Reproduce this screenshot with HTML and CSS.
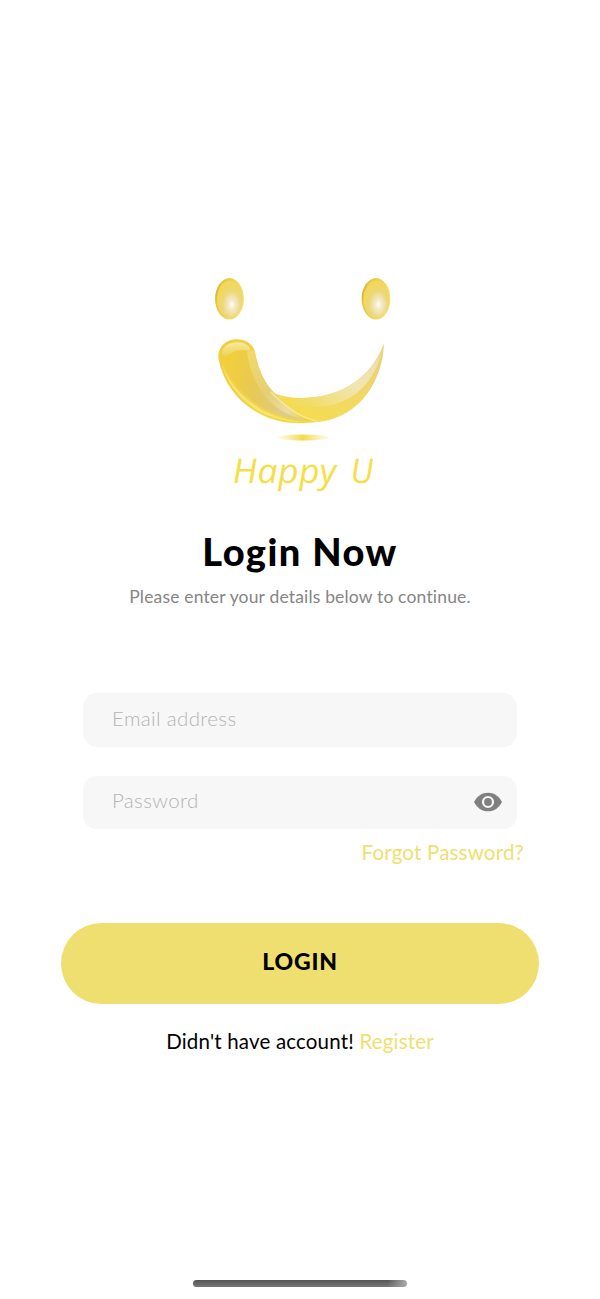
FILE: index.html
```html
<!DOCTYPE html>
<html lang="en">
<head>
<meta charset="utf-8">
<title>Login</title>
<link rel="stylesheet" href="styles.css">
</head>
<body>
<main class="screen">
  <svg class="logo" width="200" height="236" viewBox="205 270 200 236" role="img" aria-label="Happy U">
    <defs>
      <radialGradient id="eye" cx=".58" cy=".64" r=".6">
        <stop offset="0" stop-color="#fffefa"/><stop offset=".2" stop-color="#f4ebcb"/><stop offset=".6" stop-color="#ecd779"/><stop offset="1" stop-color="#f3d855"/>
      </radialGradient>
      <linearGradient id="edge" x1="0" y1="0" x2="1" y2=".4">
        <stop offset="0" stop-color="#b79b50"/><stop offset=".25" stop-color="#e5c63f"/><stop offset="1" stop-color="#f5e070"/>
      </linearGradient>
      <linearGradient id="tail" gradientUnits="userSpaceOnUse" x1="290" y1="410" x2="385" y2="350">
        <stop offset="0" stop-color="#f4dc50"/><stop offset=".5" stop-color="#f2da60"/><stop offset="1" stop-color="#e9d078"/>
      </linearGradient>
      <linearGradient id="sheen" gradientUnits="userSpaceOnUse" x1="310" y1="405" x2="385" y2="350">
        <stop offset="0" stop-color="#f2dc66"/><stop offset=".5" stop-color="#f1e5b1"/><stop offset=".8" stop-color="#eee1b0"/><stop offset="1" stop-color="#ecd572"/>
      </linearGradient>
      <linearGradient id="tube" gradientUnits="userSpaceOnUse" x1="220" y1="350" x2="295" y2="422">
        <stop offset="0" stop-color="#efcf3d"/><stop offset=".5" stop-color="#f2d34a"/><stop offset="1" stop-color="#f2d83c"/>
      </linearGradient>
      <linearGradient id="core" gradientUnits="userSpaceOnUse" x1="226" y1="378" x2="285" y2="388">
        <stop offset="0" stop-color="#f1cf3b"/><stop offset=".5" stop-color="#e8c955"/><stop offset="1" stop-color="#dfcb83"/>
      </linearGradient>
      <linearGradient id="band" gradientUnits="userSpaceOnUse" x1="247" y1="350" x2="305" y2="422">
        <stop offset="0" stop-color="#f2da68"/><stop offset=".5" stop-color="#e5cf76"/><stop offset=".8" stop-color="#ecdca0"/><stop offset="1" stop-color="#f1cf3c"/>
      </linearGradient>
      <linearGradient id="gloss" x1="0" y1="0" x2="0" y2="1">
        <stop offset="0" stop-color="#f7eaa0"/><stop offset="1" stop-color="#eed052"/>
      </linearGradient>
      <linearGradient id="glow"><stop offset="0" stop-color="#f7eaa0" stop-opacity=".2"/><stop offset=".5" stop-color="#f3da42"/><stop offset="1" stop-color="#f7eaa0" stop-opacity=".2"/></linearGradient>
    </defs>
    <g id="left-eye">
      <ellipse cx="229.5" cy="298.8" rx="14.4" ry="20.7" fill="url(#edge)"/>
      <ellipse cx="229.8" cy="299.2" rx="12.8" ry="18.8" fill="url(#eye)"/>
    </g>
    <use href="#left-eye" x="146.5"/>
    <path d="M271 392Q285 398 303 398C343 397 371 377 384 344C382 387 354 422 311 422.500Q287 418 271 392Z" fill="url(#tail)"/>
    <path d="M303 398C343 397 371 377 384 344C377 382 351 407 315 407Q303 407 290 403Z" fill="url(#sheen)"/>
    <path d="M218.500 359C217 347 226 339 237 339.200C248 339.500 255 346 255.500 355C259 371 265 384 275 393.500C288 407 301 417 317 421.500C302 424 284 424 269 418C241 407 224 386 218.500 359Z" fill="url(#tube)"/>
    <path d="M223 357C224 346 249 341 252 352C256 386 281 407 306 421C258 416 232 389 223 357Z" fill="url(#core)"/>
    <path d="M247 352Q254 347 255.500 355C259 371 265 384 275 393.500C288 407 301 417 317 421.500C275 418 252 389 247 352Z" fill="url(#band)"/>
    <path d="M222 355C221 340 245 339 250 348C252 352 247 350 240 350C231 350 224 361 222 355Z" fill="url(#gloss)"/>
    <path d="M222 363C226 381 237 396 254 408C268 418 287 422 306 422C268 420 234 398 222 363Z" fill="#f6e477"/>
    <path d="M271 392C286 408 301 418 318 421.500" fill="none" stroke="#f8eb91" stroke-width="1.200"/>
    <ellipse cx="303" cy="437.500" rx="27" ry="2.900" fill="url(#glow)"/>
    <text class="wordmark" transform="translate(232 483) skewX(3)"><tspan x="1" textLength="104" lengthAdjust="spacingAndGlyphs">Happy</tspan><tspan x="119" textLength="23" lengthAdjust="spacingAndGlyphs">U</tspan></text>
  </svg>
  <h1 class="title">Login Now</h1>
  <p class="subtitle">Please enter your details below to continue.</p>
  <form class="form">
    <label class="field"><input class="input email" type="email" placeholder="Email address"></label>
    <label class="field"><input class="input password" type="password" placeholder="Password">
      <svg class="eye" viewBox="0 0 28 20" width="28" height="20" aria-hidden="true">
        <path d="M0 10C3 4 8 .7 14 .7S25 4 28 10C25 16 20 19.300 14 19.300S3 16 0 10Z" fill="#808080"/>
        <circle cx="14" cy="10" r="5" fill="none" stroke="#f7f7f7" stroke-width="2.200"/>
      </svg>
    </label>
    <a class="forgot">Forgot Password?</a>
    <button class="login" type="button"><span class="login-text">LOGIN</span></button>
  </form>
  <p class="signup"><span class="question">Didn't have account!</span> <a class="register">Register</a></p>
  <div class="home-indicator"></div>
</main>
</body>
</html>
```
FILE: styles.css
```css
* { box-sizing: border-box; }
body { margin: 0; background: #fff; font-family: Lato, sans-serif; color: #000; }
.screen { height: 1299px; padding-top: 270px; display: flex; flex-direction: column; align-items: center; }
.logo { display: block; flex: none; margin-left: 10px; }
.wordmark { font: italic 400 34px "Open Sans", sans-serif; fill: #f5df48; }
.title { margin: 22px 0 0; font-size: 38px; font-weight: 900; line-height: 46px; letter-spacing: 1.45px; white-space: nowrap; }
.subtitle { margin: 11px 0 0; font-size: 17.5px; line-height: 24px; letter-spacing: .17px; color: #858585; white-space: nowrap; }
.form { width: 478px; margin-top: 84px; display: flex; flex-direction: column; align-items: center; }
.field { width: 434px; height: 53.5px; display: flex; align-items: center; padding: 0 15px 0 29px; background: #f7f7f7; border-radius: 14px; }
.field + .field { margin-top: 29px; }
.input { flex: 1; min-width: 0; height: 30px; margin-bottom: 4px; padding: 0; border: 0; outline: 0; background: transparent; font: 300 20.5px Lato, sans-serif; letter-spacing: .35px; }
.input::placeholder { color: #b4b4b4; opacity: 1; }
.eye { flex: none; }
.forgot { align-self: flex-end; margin: 10px 15px 0 0; font-size: 20.5px; line-height: 26px; letter-spacing: .2px; color: #efdf70; }
.login { width: 478px; height: 81px; margin-top: 57.5px; padding: 0 0 4px; border: 0; border-radius: 41px; background: #efdf70; color: #000; font: 900 23px Lato, sans-serif; letter-spacing: .8px; }
.signup { margin: 24px 0 0; font-size: 20.5px; line-height: 26px; letter-spacing: .18px; white-space: nowrap; }
.register { color: #efdf70; }
.home-indicator { width: 214px; height: 7px; margin-top: auto; margin-bottom: 12px; border-radius: 4px; background: linear-gradient(90deg, transparent 91%, #aaa), linear-gradient(#555, #777); }
```
